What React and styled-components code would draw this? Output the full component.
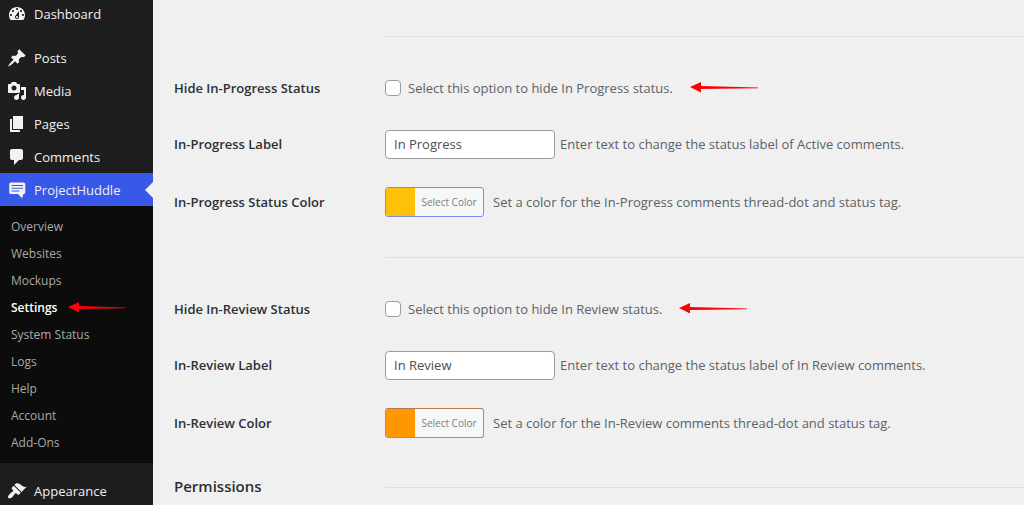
import React, { useState } from "react";
import styled, { createGlobalStyle } from "styled-components";

const icons = {
  dashboard:
    "M3.76 16h12.48c1.1-1.37 1.76-3.11 1.76-5 0-4.42-3.58-8-8-8s-8 3.58-8 8c0 1.89.66 3.63 1.76 5zM10 4c.55 0 1 .45 1 1s-.45 1-1 1-1-.45-1-1 .45-1 1-1zM6 6c.55 0 1 .45 1 1s-.45 1-1 1-1-.45-1-1 .45-1 1-1zm8 0c.55 0 1 .45 1 1s-.45 1-1 1-1-.45-1-1 .45-1 1-1zm-5.37 5.55L12 7v6c0 1.1-.9 2-2 2s-2-.9-2-2c0-.57.24-1.08.63-1.45zM4 10c.55 0 1 .45 1 1s-.45 1-1 1-1-.45-1-1 .45-1 1-1zm12 0c.55 0 1 .45 1 1s-.45 1-1 1-1-.45-1-1 .45-1 1-1zm-5 3c0-.55-.45-1-1-1s-1 .45-1 1 .45 1 1 1 1-.45 1-1z",
  posts:
    "M10.44 3.02l1.82-1.82 6.36 6.35-1.83 1.82c-1.05-.68-2.48-.57-3.41.36l-.75.75c-.92.93-1.04 2.35-.35 3.41l-1.83 1.82-2.41-2.41-2.8 2.79c-.42.42-3.38 2.71-3.8 2.29s1.86-3.39 2.28-3.81l2.79-2.79L4.1 9.36l1.83-1.82c1.05.69 2.48.57 3.4-.36l.75-.75c.93-.92 1.05-2.35.36-3.41z",
  media:
    "M13 11V4c0-.55-.45-1-1-1h-1.67L9 1H5L3.67 3H2c-.55 0-1 .45-1 1v7c0 .55.45 1 1 1h10c.55 0 1-.45 1-1zM7 4.5c1.38 0 2.5 1.12 2.5 2.5S8.38 9.5 7 9.5 4.5 8.38 4.5 7 5.62 4.5 7 4.5zM14 6h5v10.5c0 1.38-1.12 2.5-2.5 2.5S14 17.88 14 16.5s1.12-2.5 2.5-2.5c.17 0 .34.02.5.05V9h-3V6zm-4 8.05V13h2v3.5c0 1.38-1.12 2.5-2.5 2.5S7 17.88 7 16.5 8.12 14 9.5 14c.17 0 .34.02.5.05z",
  pages: "M6 15V2h10v13H6zm-1 1h8v2H3V5h2v11z",
  comments:
    "M5 2h9c1.1 0 2 .9 2 2v7c0 1.1-.9 2-2 2h-2l-5 5v-5H5c-1.1 0-2-.9-2-2V4c0-1.1.9-2 2-2z",
  huddle:
    "M4 2.5h12.5c1 0 1.8.8 1.8 1.8v7.9c0 1-.8 1.8-1.8 1.8l-1.5 4.2L11 14H4c-1 0-1.800-.8-1.800-1.800V4.300c0-1 .8-1.800 1.800-1.800zM4.500 5v1h11.500V5zm0 2.800v1h11.500v-1zm0 2.800v1h8v-1z",
  appearance:
    "M14.48 11.06L7.41 3.99l1.5-1.5c.5-.56 2.3-.47 3.51.32 1.21.8 1.43 1.28 2.91 2.1 1.18.64 2.45 1.26 4.45.85zm-.71.71L6.7 4.7 4.93 6.47c-.39.39-.39 1.02 0 1.41l1.06 1.06c.39.39.39 1.03 0 1.42-.6.6-1.43 1.11-2.21 1.69-.35.26-.7.53-1.01.84C1.43 14.23.4 16.08 1.4 17.07c.99 1 2.84-.03 4.18-1.36.31-.31.58-.66.85-1.02.57-.78 1.08-1.61 1.69-2.21.39-.39 1.02-.39 1.41 0l1.06 1.06c.39.39 1.02.39 1.41 0z",
};

const mainMenu = [
  { icon: "posts", label: "Posts" },
  { icon: "media", label: "Media" },
  { icon: "pages", label: "Pages" },
  { icon: "comments", label: "Comments" },
  { icon: "huddle", label: "ProjectHuddle", active: true },
];

const subMenu = [
  "Overview",
  "Websites",
  "Mockups",
  "Settings",
  "System Status",
  "Logs",
  "Help",
  "Account",
  "Add-Ons",
];

function MenuItem({ icon, label, active }) {
  return (
    <MenuLink href="#" $active={active}>
      <MenuIcon viewBox="0 0 20 20" aria-hidden="true">
        <path fillRule="evenodd" d={icons[icon]} />
      </MenuIcon>
      {label}
    </MenuLink>
  );
}

function Arrow({ width }) {
  return (
    <ArrowSvg
      width={width}
      height="14"
      viewBox={`0 0 ${width} 14`}
      aria-hidden="true"
    >
      <path d={`M0 6L11 1V5L${width} 6.5V7.2L11 8V11.5z`} />
    </ArrowSvg>
  );
}

function StatusSettings({ id, name, colorLabel, color, edge, labelTarget }) {
  const [hidden, setHidden] = useState(false);
  const [label, setLabel] = useState(name);
  const slug = name.replace(" ", "-");

  return (
    <>
      <Row $height="52px">
        <RowLabel htmlFor={`${id}-hide`}>Hide {slug} Status</RowLabel>
        <Field $gap="17px">
          <CheckLabel>
            <Checkbox
              id={`${id}-hide`}
              type="checkbox"
              checked={hidden}
              onChange={(e) => setHidden(e.target.checked)}
            />
            Select this option to hide {name} status.
          </CheckLabel>
          <Arrow width={68} />
        </Field>
      </Row>
      <Row $height="60px">
        <RowLabel htmlFor={`${id}-label`}>{slug} Label</RowLabel>
        <Field $gap="5px">
          <TextInput
            id={`${id}-label`}
            type="text"
            value={label}
            onChange={(e) => setLabel(e.target.value)}
          />
          <Description>
            Enter text to change the status label of {labelTarget} comments.
          </Description>
        </Field>
      </Row>
      <Row $height="56px">
        <RowLabel htmlFor={`${id}-color`}>{colorLabel}</RowLabel>
        <Field $gap="9px">
          <ColorButton id={`${id}-color`} type="button" $edge={edge}>
            <Swatch $color={color} />
            <ColorText>Select Color</ColorText>
          </ColorButton>
          <Description>
            Set a color for the {slug} comments thread-dot and status tag.
          </Description>
        </Field>
      </Row>
    </>
  );
}

function App() {
  return (
    <Page>
      <GlobalStyle />
      <Sidebar>
        <MenuItem icon="dashboard" label="Dashboard" />
        <Separator />
        {mainMenu.map((item) => (
          <MenuItem key={item.label} {...item} />
        ))}
        <SubMenu>
          {subMenu.map((label) => (
            <li key={label}>
              <SubLink href="#" $current={label === "Settings"}>
                {label}
                {label === "Settings" && <Arrow width={57} />}
              </SubLink>
            </li>
          ))}
        </SubMenu>
        <Separator />
        <MenuItem icon="appearance" label="Appearance" />
      </Sidebar>
      <Main>
        <Row $height="53px">
          <Line />
        </Row>
        <StatusSettings
          id="progress"
          name="In Progress"
          colorLabel="In-Progress Status Color"
          color="#ffc107"
          edge="#7c8cf0"
          labelTarget="Active"
        />
        <Row $height="53px">
          <Line />
        </Row>
        <StatusSettings
          id="review"
          name="In Review"
          colorLabel="In-Review Color"
          color="#ff9800"
          edge="#b5794f"
          labelTarget="In Review"
        />
        <Row $height="70px">
          <SectionTitle>Permissions</SectionTitle>
          <Line />
        </Row>
      </Main>
    </Page>
  );
}

export default App;

const GlobalStyle = createGlobalStyle`
  * {
    box-sizing: border-box;
  }
  body {
    margin: 0;
    background: #f0f0f0;
    font-family: "Open Sans", "Noto Sans", sans-serif;
    font-size: 13px;
    color: #5c6167;
  }
`;

const Page = styled.div`
  display: flex;
  height: 100vh;
  overflow: hidden;
`;

const Sidebar = styled.nav`
  flex: 0 0 153px;
  align-self: flex-start;
  margin-top: -3px;
  background: #1e1e1e;
`;

const MenuLink = styled.a`
  position: relative;
  display: flex;
  align-items: center;
  gap: 7px;
  height: 33px;
  padding-left: 7px;
  font-size: 13px;
  color: #f0f0f1;
  text-decoration: none;
  background: ${(props) => (props.$active ? "#3858e9" : "transparent")};

  &::after {
    content: "";
    display: ${(props) => (props.$active ? "block" : "none")};
    position: absolute;
    right: 0;
    border: 8px solid transparent;
    border-left-width: 0;
    border-right-color: #f0f0f0;
  }
`;

const MenuIcon = styled.svg`
  width: 20px;
  height: 20px;
  fill: #f3f1f1;
`;

const Separator = styled.div`
  height: 11px;
`;

const SubMenu = styled.ul`
  margin: 0;
  padding: 7px 0;
  list-style: none;
  background: #0c0c0c;
`;

const SubLink = styled.a`
  display: flex;
  align-items: center;
  gap: 11px;
  height: 27px;
  padding-left: 11px;
  font-size: 12px;
  font-weight: ${(props) => (props.$current ? 600 : 400)};
  color: ${(props) => (props.$current ? "#ffffff" : "#a9a9a9")};
  text-decoration: none;
`;

const ArrowSvg = styled.svg`
  flex: none;
  fill: #fb0007;
`;

const Main = styled.main`
  flex: 1;
  min-width: 0;
  padding: 9px 0 0 21px;
`;

const Row = styled.div`
  display: grid;
  grid-template-columns: 211px 1fr;
  align-items: center;
  height: ${(props) => props.$height};
`;

const Line = styled.hr`
  grid-column: 2;
  width: 100%;
  margin: 2px 0 0;
  border: 0;
  border-top: 1px solid #dedede;
`;

const RowLabel = styled.label`
  font-size: 13px;
  font-weight: 600;
  color: #2c3035;
`;

const SectionTitle = styled.h2`
  margin: 0;
  font-size: 15px;
  font-weight: 600;
  color: #2c3035;
`;

const Field = styled.div`
  display: flex;
  align-items: center;
  gap: ${(props) => props.$gap};
  white-space: nowrap;
`;

const CheckLabel = styled.label`
  display: flex;
  align-items: center;
  gap: 7px;
`;

const Checkbox = styled.input`
  appearance: none;
  width: 16px;
  height: 16px;
  margin: 0;
  border: 1px solid #9a9ca0;
  border-radius: 4px;
  background: #ffffff;

  &:checked {
    background: #3858e9;
  }
`;

const TextInput = styled.input`
  width: 170px;
  height: 29px;
  padding: 0 8px;
  border: 1px solid #9a9ca0;
  border-radius: 4px;
  background: #ffffff;
  font-family: inherit;
  font-size: 13px;
  color: #4a4f55;
`;

const Description = styled.span`
  font-size: 13px;
`;

const ColorButton = styled.button`
  display: flex;
  width: 99px;
  height: 30px;
  padding: 0;
  overflow: hidden;
  border: 1px solid #7c8cf0;
  border-top-color: ${(props) => props.$edge};
  border-radius: 3px;
  background: #f6f7f7;
  font-family: inherit;
  cursor: pointer;
`;

const Swatch = styled.span`
  flex: 0 0 29px;
  align-self: stretch;
  background: ${(props) => props.$color};
`;

const ColorText = styled.span`
  flex: 1;
  align-self: center;
  font-size: 10px;
  color: #7a7e83;
`;
